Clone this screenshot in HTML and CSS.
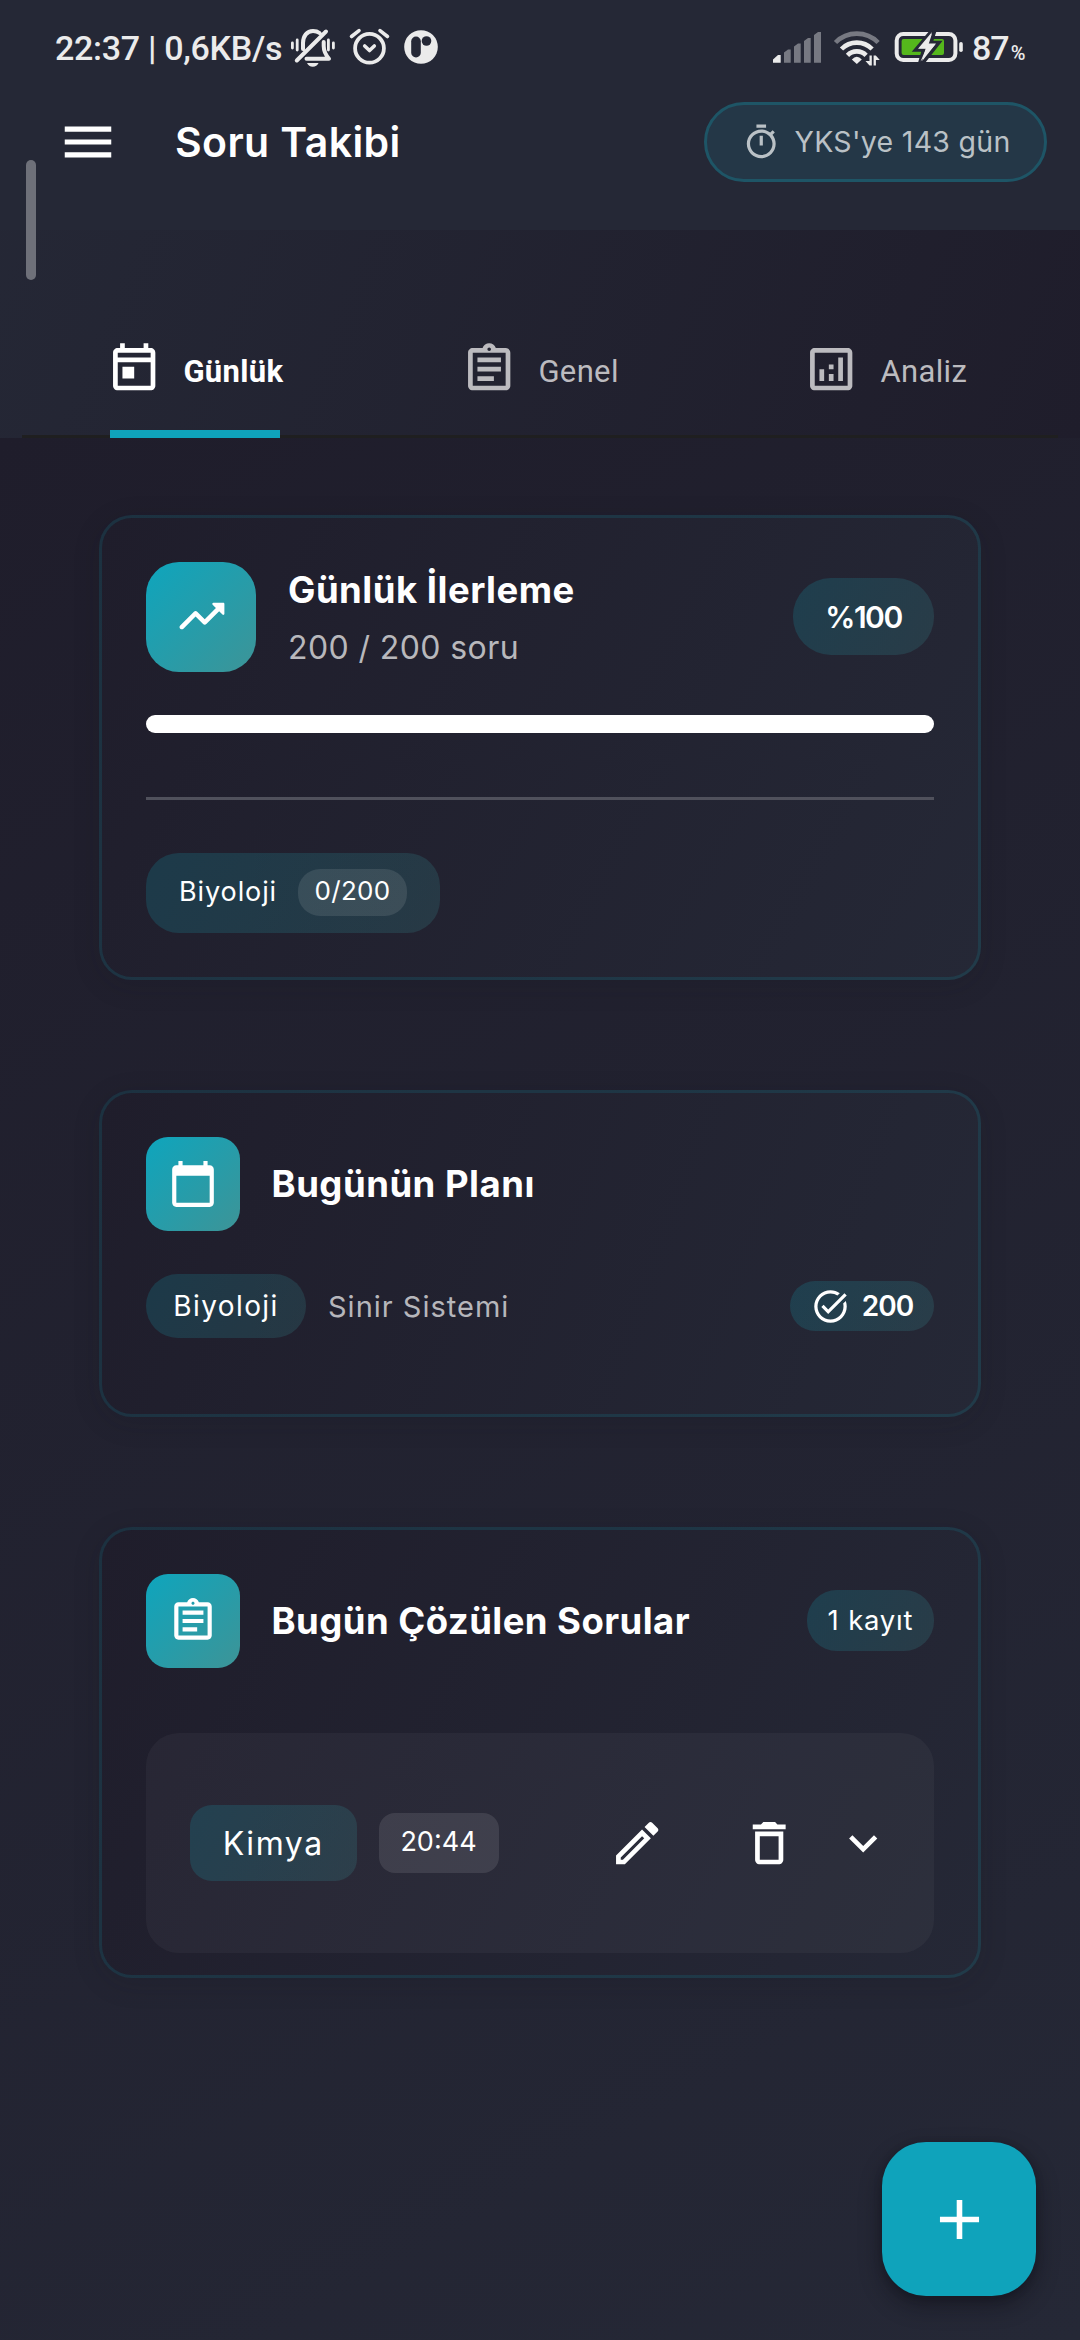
FILE: index.html
```html
<!DOCTYPE html>
<html lang="tr">
<head>
<meta charset="utf-8">
<title>Soru Takibi</title>
<link rel="stylesheet" href="styles.css">
</head>
<body>
<div class="screen">
  <header class="top">
    <div class="bar">
      <div class="status">
        <span class="clock">22:37 | 0,6KB/s</span>
        <svg class="status-left" width="150" height="44" viewBox="290 26 150 44" fill="none" stroke="#ebebeb" stroke-linecap="round" stroke-linejoin="round">
          <path stroke-width="2.8" d="M292.4 43v5M297.2 40v10M328.4 40v10M333.4 43v5"/>
          <path stroke-width="4" d="M303 49v-6c0-7 4-12 10-12 3 0 5 .8 6.500 2M296.800 60.500L326 31.500M323.700 42v4c0 5 2 9 5.300 12.800H306.500"/>
          <path fill="#ebebeb" stroke="none" d="M307 63h11.600c-1 2.400-3.200 3.700-5.800 3.700s-4.800-1.300-5.800-3.700z"/>
          <circle cx="369.500" cy="48.300" r="14.400" stroke-width="3.800"/>
          <path stroke-width="3.600" d="M364.700 46l4.800 4.500 4.800-4.500M351.500 36.500l7.500-5.800M387.500 36.500l-7.500-5.800"/>
          <circle cx="421" cy="47" r="16.800" fill="#ebebeb" stroke="none"/>
          <rect x="411.200" y="36.500" width="9.600" height="21" rx="4.800" fill="#252836" stroke="none"/>
          <circle cx="426.500" cy="41" r="4.800" fill="#252836" stroke="none"/>
        </svg>
        <svg class="status-right" width="192" height="44" viewBox="772 26 192 44">
          <path fill="#ebebeb" d="M773 59.500l5-4.500h2.700v7.700H773z"/>
          <path fill="#777982" d="M784 52.500l4-3h2.700v13.200H784zM794 46.500l4-3h2.700v19.200H794zM804 41l4-3h2.700v24.700H804zM814 35l4-3h3v30.700H814z"/>
          <g fill="none" stroke="#ebebeb" stroke-width="4.600">
            <path stroke="#777982" d="M835.500 42.500a30 30 0 0 1 42.600 0"/>
            <path d="M841.500 49a21.500 21.500 0 0 1 30.600 0"/>
            <path d="M847.500 55.300a13 13 0 0 1 18.600 0"/>
          </g>
          <path fill="#ebebeb" d="M851.800 59.500q5-5.500 10 0l-5 4.500z"/>
          <path fill="#ebebeb" d="M869.500 55.500h2.300v10h-2.300l-4-4.500h4zM873.600 65.500v-10h2.200l4 4.500h-3.900v5.500z"/>
          <rect x="896.700" y="34" width="58.700" height="26" rx="6.500" fill="none" stroke="#ebebeb" stroke-width="4"/>
          <rect x="901.600" y="39" width="42.400" height="16" rx="2" fill="#55b71c"/>
          <path d="M932.500 30l-17 20h8l-4 14h2.500l17-21.500h-8l4-12.500z" fill="#ebebeb" stroke="#252836" stroke-width="3.500"/>
          <path d="M932 32l-14 16.800h8L920.500 61.500l15.500-18h-8z" fill="#ebebeb"/>
          <rect x="959.200" y="42" width="3.600" height="10" rx="1.800" fill="#ebebeb"/>
        </svg>
        <span class="level">87<small>%</small></span>
      </div>
      <div class="appbar">
        <svg class="menu" viewBox="0 0 24 24"><path d="M3 18h18v-2H3v2zm0-5h18v-2H3v2zm0-7v2h18V6H3z"/></svg>
        <h1>Soru Takibi</h1>
        <div class="countdown">
          <svg viewBox="0 0 24 24"><path d="M9 1h6v2H9zM19.030 7.390l1.420-1.420c-.43-.51-.9-.99-1.410-1.410l-1.420 1.420C16.070 4.740 14.120 4 12 4c-4.970 0-9 4.030-9 9s4.020 9 9 9 9-4.030 9-9c0-2.120-.74-4.070-1.970-5.610zM12 20c-3.870 0-7-3.130-7-7s3.130-7 7-7 7 3.130 7 7-3.130 7-7 7zM11 8h2v6h-2z"/></svg>
          <span>YKS'ye 143 gün</span>
        </div>
      </div>
    </div>
    <nav class="tabs">
      <a class="tab tab-daily active">
        <svg viewBox="0 0 24 24"><path fill-rule="evenodd" d="M19 3h-1V1h-2v2H8V1H6v2H5c-1.100 0-2 .9-2 2v14c0 1.100.9 2 2 2h14c1.100 0 2-.9 2-2V5c0-1.100-.9-2-2-2zm0 16H5V9h14v10zm0-12H5V5h14v2zM7 11h5v5H7z"/></svg>
        <span>Günlük</span>
      </a>
      <a class="tab tab-general">
        <svg viewBox="0 0 24 24"><path d="M7 15h7v2H7zm0-4h10v2H7zm0-4h10v2H7zm12-4h-4.180C14.400 1.840 13.300 1 12 1s-2.400.84-2.820 2H5c-1.100 0-2 .9-2 2v14c0 1.100.9 2 2 2h14c1.100 0 2-.9 2-2V5c0-1.100-.9-2-2-2zm-7-.25c.41 0 .75.34.75.75s-.34.75-.75.75-.75-.34-.75-.75.34-.75.75-.75zM19 19H5V5h14v14z"/></svg>
        <span>Genel</span>
      </a>
      <a class="tab tab-analysis">
        <svg viewBox="0 0 24 24"><path d="M19 3H5c-1.100 0-2 .9-2 2v14c0 1.100.9 2 2 2h14c1.100 0 2-.9 2-2V5c0-1.100-.9-2-2-2zm0 16H5V5h14v14zM7 12h2v5H7zm8-5h2v10h-2zm-4 7h2v3h-2zm0-4h2v2h-2z"/></svg>
        <span>Analiz</span>
      </a>
    </nav>
  </header>

  <main class="content">
    <section class="card progress-card">
      <div class="head progress-head">
        <div class="tile tile-large">
          <svg viewBox="0 0 24 24"><path d="M16.850 6.850l1.440 1.440-4.880 4.880-3.290-3.290c-.39-.39-1.020-.39-1.410 0l-6 6.010c-.39.39-.39 1.020 0 1.410.39.39 1.020.39 1.410 0L9.410 12l3.290 3.290c.39.39 1.020.39 1.410 0l5.590-5.580 1.440 1.440c.31.31.85.09.85-.35V6.500c.010-.28-.21-.5-.49-.5h-4.290c-.45 0-.67.54-.36.85z"/></svg>
        </div>
        <div class="summary">
          <h2>Günlük İlerleme</h2>
          <p>200 / 200 soru</p>
        </div>
        <span class="badge percent">%100</span>
      </div>
      <div class="track"><div class="fill" style="width:100%"></div></div>
      <hr>
      <div class="badge subject-chip">
        <span class="subject">Biyoloji</span>
        <span class="count">0/200</span>
      </div>
    </section>

    <section class="card plan-card">
      <div class="head">
        <div class="tile">
          <svg viewBox="0 0 24 24"><path d="M20 3h-1V1h-2v2H7V1H5v2H4c-1.100 0-2 .9-2 2v16c0 1.100.9 2 2 2h16c1.100 0 2-.9 2-2V5c0-1.100-.9-2-2-2zm0 18H4V8h16v13z"/></svg>
        </div>
        <h2 class="plan-title">Bugünün Planı</h2>
      </div>
      <div class="plan-row">
        <span class="badge plan-subject">Biyoloji</span>
        <span class="topic">Sinir Sistemi</span>
        <span class="badge done">
          <svg viewBox="0 0 24 24"><path d="M22 5.180L10.590 16.600l-4.240-4.240 1.410-1.410 2.830 2.830 10-10L22 5.180zM19.790 10.220c.13.570.21 1.170.21 1.780 0 4.420-3.580 8-8 8s-8-3.580-8-8 3.580-8 8-8c1.580 0 3.040.46 4.280 1.250l1.440-1.440C16.100 2.670 14.130 2 12 2 6.480 2 2 6.480 2 12s4.480 10 10 10 10-4.480 10-10c0-1.190-.22-2.330-.6-3.390l-1.610 1.610z"/></svg>
          <span>200</span>
        </span>
      </div>
    </section>

    <section class="card solved-card">
      <div class="head">
        <div class="tile">
          <svg viewBox="0 0 24 24"><path d="M7 15h7v2H7zm0-4h10v2H7zm0-4h10v2H7zm12-4h-4.180C14.400 1.840 13.300 1 12 1s-2.400.84-2.820 2H5c-1.100 0-2 .9-2 2v14c0 1.100.9 2 2 2h14c1.100 0 2-.9 2-2V5c0-1.100-.9-2-2-2zm-7-.25c.41 0 .75.34.75.75s-.34.75-.75.75-.75-.34-.75-.75.34-.75.75-.75zM19 19H5V5h14v14z"/></svg>
        </div>
        <h2 class="solved-title">Bugün Çözülen Sorular</h2>
        <span class="badge records">1 kayıt</span>
      </div>
      <div class="entry">
        <span class="badge entry-subject">Kimya</span>
        <span class="time">20:44</span>
        <svg class="edit" viewBox="0 0 24 24"><path d="M14.060 9l.94.94L5.920 19H5v-.92L14.060 9m3.600-6c-.25 0-.51.1-.7.290l-1.830 1.830 3.750 3.750 1.830-1.830c.39-.39.39-1.040 0-1.410l-2.340-2.340c-.2-.2-.45-.290-.71-.290m-3.600 3.190L3 17.250V21h3.750L17.810 9.940l-3.750-3.750z"/></svg>
        <svg class="trash" viewBox="0 0 24 24"><path d="M16 9v10H8V9h8m-1.500-6h-5l-1 1H5v2.100h14V4h-3.500l-1-1zM18 7H6v12c0 1.100.9 2 2 2h8c1.100 0 2-.9 2-2V7z"/></svg>
        <svg class="chevron" viewBox="0 0 24 24"><path d="M16.590 8.590L12 13.170 7.410 8.590 6 10l6 6 6-6z"/></svg>
      </div>
    </section>
  </main>

  <div class="edge-handle"></div>
  <button class="fab" aria-label="Ekle"><svg viewBox="0 0 24 24"><path d="M19 13h-6v6h-2v-6H5v-2h6V5h2v6h6v2z"/></svg></button>
</div>
</body>
</html>
```
FILE: styles.css
```css
* { box-sizing: border-box; }
body { margin: 0; background: #1f1d2b; font-family: Inter, "Noto Sans", sans-serif; color: #fff; }
h1, h2, p { margin: 0; white-space: nowrap; }
span { white-space: nowrap; }
svg { display: block; flex: none; fill: currentColor; }

.screen { position: relative; width: 1080px; height: 2340px; overflow: hidden; display: flex; flex-direction: column; }

.top { height: 438px; background: linear-gradient(112deg, #252836, #1f1d2b); }
.bar { height: 230px; background: #252836; }

.status { height: 95px; display: flex; align-items: center; padding-left: 55px; font-family: Roboto, sans-serif; font-weight: 500; font-size: 34px; color: #ebebeb; }
.clock { width: 235px; letter-spacing: -.3px; }
.status-left { fill: none; }
.status-right { margin-left: 332px; }
.level { margin-left: 8px; letter-spacing: -1px; }
.level small { font-size: 20px; margin-left: 2px; letter-spacing: 0; }

.appbar { height: 94px; display: flex; align-items: center; padding: 0 33px 0 57px; }
.menu { width: 62px; height: 62px; }
h1 { margin-left: 56px; font-size: 41px; font-weight: 600; letter-spacing: .4px; }
.countdown { margin-left: auto; width: 343px; height: 80px; border: 3px solid #1e5566; border-radius: 40px; background: #243747; display: flex; align-items: center; gap: 14px; padding-left: 35px; color: #bac1c6; font-size: 28.500px; letter-spacing: .3px; }
.countdown svg { width: 38.5px; height: 38.5px; }
.countdown span { padding-bottom: 1px; }

.tabs { height: 208px; margin: 0 22px; padding: 0 91px 0 88px; display: flex; justify-content: space-between; align-items: flex-end; border-bottom: 3px solid #1f1f20; font-family: Roboto, sans-serif; font-size: 31px; letter-spacing: .35px; color: #bcbbbf; }
.tab { display: flex; align-items: center; height: 138px; margin-bottom: -3px; padding-top: 9px; gap: 21px; border-bottom: 8.500px solid transparent; }
.tab svg { width: 56.4px; height: 56.4px; margin-left: -4px; }
.tab span { padding-top: 3px; }
.tab-daily { width: 170px; }
.tab-general { width: 157px; }
.tab-analysis { width: 160px; }
.active { color: #fff; font-weight: 700; border-bottom-color: #0fa3bb; }

.content { flex: 1; padding: 76.5px 99px 0; display: flex; flex-direction: column; gap: 110px; background: linear-gradient(150.4deg, #1f1d2b, #252836); }
.card { border: 3px solid rgba(14, 165, 186, .15); border-radius: 33px; padding: 44px 44px 0; box-shadow: 0 6px 28px rgba(20, 20, 30, .14); }
.progress-card { height: 465.5px; background: linear-gradient(117.800deg, #1f1d2b, #252836) border-box; }
.plan-card { height: 327px; background: linear-gradient(110.300deg, #1f1d2b, #252836) border-box; }
.solved-card { height: 451px; background: linear-gradient(117.100deg, #1f1d2b, #252836) border-box; }

.head { display: flex; align-items: center; height: 93.500px; }
.progress-head { height: 110.700px; }
.tile { width: 93.500px; height: 93.500px; border-radius: 22px; background: linear-gradient(135deg, #0ea5bd, #3d9497); display: grid; place-items: center; flex: none; }
.tile svg { width: 50px; height: 50px; }
.tile-large { width: 110px; height: 110.700px; border-radius: 33px; }
.tile-large svg { width: 55px; height: 55px; }
h2 { font-size: 36.500px; font-weight: 700; line-height: 56px; letter-spacing: .5px; }
.summary { margin-left: 32px; align-self: flex-start; }
.summary p { font-size: 32px; line-height: 60px; letter-spacing: .4px; color: #b8b8bc; }
.plan-title, .solved-title { margin-left: 32px; }
.solved-title { letter-spacing: .45px; }

.badge { background: linear-gradient(118deg, rgba(14, 165, 186, .2), rgba(61, 148, 151, .2)); display: flex; align-items: center; justify-content: center; }
.percent { margin-left: auto; width: 141px; height: 77px; border-radius: 38px; font-size: 30px; font-weight: 600; letter-spacing: -1.500px; }
.track { margin-top: 43px; height: 17.500px; border-radius: 9px; overflow: hidden; background: #35384a; }
.fill { height: 100%; background: #fff; }
hr { margin: 64px 0 53px; height: 3px; border: 0; background: #50515c; }
.subject-chip { width: 294px; height: 80px; border-radius: 33px; justify-content: space-between; padding: 0 33px; }
.subject { font-size: 27px; letter-spacing: .9px; padding-bottom: 3px; }
.count { width: 109px; height: 47px; border-radius: 22px; background: rgba(255, 255, 255, .1); display: flex; align-items: center; justify-content: center; font-size: 26px; letter-spacing: .3px; padding-bottom: 5px; }

.plan-row { margin-top: 43.500px; height: 64px; display: flex; align-items: center; }
.plan-subject { width: 160px; height: 64px; border-radius: 32px; font-size: 28px; letter-spacing: 1.400px; }
.topic { margin-left: 22px; font-size: 29px; letter-spacing: 1px; color: #b6b6bb; }
.done { margin-left: auto; width: 144px; height: 50px; border-radius: 25px; gap: 12px; font-size: 28px; font-weight: 600; letter-spacing: -1px; }
.done svg { width: 39px; height: 39px; }

.records { margin-left: auto; width: 127px; height: 61px; border-radius: 30px; font-size: 27.500px; letter-spacing: .8px; padding-bottom: 2px; }
.entry { margin-top: 65.500px; height: 220px; border-radius: 33px; background: rgba(255, 255, 255, .04); display: flex; align-items: center; padding: 0 43px 0 44px; }
.entry-subject { width: 166.500px; height: 76.500px; border-radius: 22px; font-size: 32px; letter-spacing: 1.600px; }
.time { margin-left: 22px; width: 120px; height: 60.500px; border-radius: 16px; background: rgba(255, 255, 255, .1); display: flex; align-items: center; justify-content: center; font-size: 27px; padding-bottom: 4px; }
.entry svg { width: 56.400px; height: 56.400px; }
.edit { margin-left: auto; }
.trash { margin-left: 76px; }
.chevron { margin-left: 37px; }

.edge-handle { position: absolute; left: 26px; top: 160px; width: 10px; height: 120px; border-radius: 5px; background: #6e7079; }
.fab { position: absolute; left: 882px; top: 2142px; width: 154px; height: 154px; padding: 0; border: 0; border-radius: 44px; background: #0fa3bb; color: #fff; display: grid; place-items: center; box-shadow: 0 10px 22px rgba(10, 10, 16, .42), 0 2px 8px rgba(10, 10, 16, .2); }
.fab svg { width: 67px; height: 67px; }
```
